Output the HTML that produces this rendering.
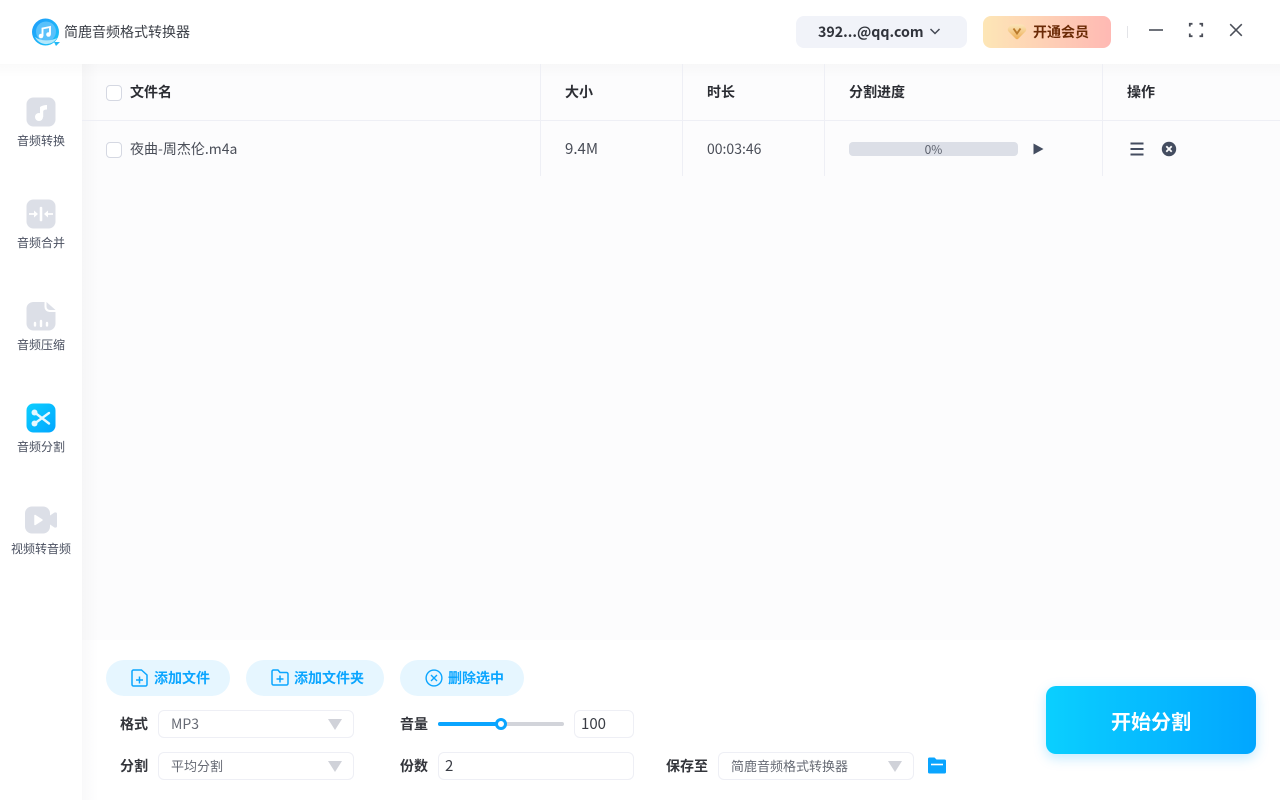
<!DOCTYPE html>
<html lang="zh">
<head>
<meta charset="utf-8">
<style>
html,body{margin:0;padding:0;width:1280px;height:800px;overflow:hidden;background:#fff;font-family:"Noto Sans CJK SC","Liberation Sans",sans-serif;}
.a{position:absolute;white-space:nowrap;}
.t{line-height:20px;height:20px;}
.nav{font-size:12px;color:#4a5060;width:82px;text-align:center;left:0;line-height:16px;}
.th{font-size:14px;font-weight:bold;color:#2b2d33;}
.td{font-size:14px;color:#4a4e58;}
.line{position:absolute;background:#eeeff5;}
.cb{position:absolute;width:14px;height:14px;border:1px solid #d5d8e2;border-radius:4px;background:#fff;left:106px;}
.pill{position:absolute;top:660px;height:36px;border-radius:18px;background:#e6f6ff;}
.pt{font-size:14px;font-weight:bold;color:#0aa5ff;}
.lb{font-size:14px;font-weight:bold;color:#33353b;}
.box{position:absolute;box-sizing:border-box;border:1px solid #eeeff5;border-radius:6px;background:#fff;height:28px;}
.v{font-size:13px;color:#666a74;}
.arr{position:absolute;width:0;height:0;border-left:7px solid transparent;border-right:7px solid transparent;border-top:11px solid #d0d2d9;}
svg{position:absolute;display:block;}
</style>
</head>
<body>
<!-- content background -->
<div class="a" style="left:82px;top:64px;width:1198px;height:576px;background:#fcfcfd;"></div>
<div class="a" style="left:82px;top:64px;width:16px;height:576px;background:linear-gradient(90deg,#f6f6f7,#fcfcfd);"></div>
<div class="a" style="left:0;top:64px;width:1280px;height:14px;background:linear-gradient(180deg,rgba(0,0,0,.018),rgba(0,0,0,0));"></div>
<div class="a" style="left:82px;top:640px;width:16px;height:160px;background:linear-gradient(90deg,#f9f9fa,#fff);"></div>

<!-- title bar -->
<svg style="left:30px;top:16px" width="32" height="32" viewBox="0 0 32 32">
  <defs><linearGradient id="lg" x1="0" y1="0" x2="1" y2="1"><stop offset="0" stop-color="#1f9bfb"/><stop offset="1" stop-color="#1cc6f7"/></linearGradient></defs>
  <circle cx="15.500" cy="16" r="13.500" fill="url(#lg)"/>
  <path d="M24 26 L30 26 L26 30 Z" fill="#22b8f5"/>
  <circle cx="16" cy="15.500" r="10" fill="#59c1fb"/>
  <path d="M5 21 A12.500 12.500 0 0 0 27 22 A15 9 0 0 1 5 21Z" fill="#b5e8fb"/>
  <path d="M12.500 20V12.500L20 11V18.500" fill="none" stroke="#fff" stroke-width="1.900"/>
  <circle cx="11" cy="20" r="2.300" fill="#fff"/><circle cx="18.500" cy="18.500" r="2.300" fill="#fff"/>
</svg>
<div class="a t" style="left:64px;top:22px;font-size:14px;color:#3c4048;">简鹿音频格式转换器</div>

<div class="a" style="left:796px;top:16px;width:171px;height:32px;border-radius:8px;background:#f1f3f9;"></div>
<div class="a t" style="left:818px;top:22px;font-size:14.200px;font-weight:bold;color:#30333b;">392...@qq.com</div>
<svg style="left:929px;top:27px" width="12" height="9" viewBox="0 0 12 9"><path d="M1.500 2 L6 6.500 L10.500 2" fill="none" stroke="#444954" stroke-width="1.500"/></svg>

<div class="a" style="left:983px;top:16px;width:128px;height:32px;border-radius:8px;background:linear-gradient(90deg,#fde6b6,#ffb9b4);"></div>
<svg style="left:1007px;top:22px" width="20" height="19" viewBox="0 0 20 19">
  <defs><linearGradient id="dm" x1="0" y1="0" x2="0" y2="1"><stop offset="0" stop-color="#fbe6bb"/><stop offset="1" stop-color="#eeae55"/></linearGradient></defs>
  <path d="M5.500 2.500H14.500Q16 2.500 17 3.500L18.500 5.500Q20 7.500 18.500 9.500L11.500 16.500Q10 18 8.500 16.500L1.500 9.500Q0 7.500 1.500 5.500L3 3.500Q4 2.500 5.500 2.500Z" fill="url(#dm)"/>
  <path d="M6.500 6.500L10 11.500L13.500 6.500" fill="none" stroke="#b97a2c" stroke-width="1.900"/>
</svg>
<div class="a t" style="left:1033px;top:22px;font-size:14px;font-weight:bold;color:#6b2a06;">开通会员</div>

<div class="a" style="left:1127px;top:26px;width:1px;height:12px;background:#e3e4e8;"></div>
<svg style="left:1148px;top:22px" width="16" height="16" viewBox="0 0 16 16"><path d="M1 8H15" stroke="#4a4e58" stroke-width="1.600"/></svg>
<svg style="left:1188px;top:22px" width="16" height="16" viewBox="0 0 16 16"><path d="M1.800 4.500V1.800H4.500M11.500 1.800H14.200V4.500M14.200 11.500V14.200H11.500M4.500 14.200H1.800V11.500" fill="none" stroke="#4a4e58" stroke-width="1.800"/></svg>
<svg style="left:1228px;top:22px" width="16" height="16" viewBox="0 0 16 16"><path d="M2.200 2.200L13.800 13.800M13.800 2.200L2.200 13.800" stroke="#4a4e58" stroke-width="1.500"/></svg>

<!-- sidebar -->
<svg style="left:26px;top:97px" width="30" height="30" viewBox="0 0 30 30"><rect x=".5" y=".5" width="29" height="29" rx="7" fill="#dcdfe7"/><path d="M14 20V10Q17 8 21 8V12.500Q18 12.500 17.200 14V20" fill="#fff"/><circle cx="13" cy="20" r="4" fill="#fff"/></svg>
<div class="a nav" style="top:133px;">音频转换</div>

<svg style="left:26px;top:199px" width="30" height="30" viewBox="0 0 30 30"><rect x=".5" y=".5" width="29" height="29" rx="7" fill="#dcdfe7"/><path d="M15 9V21" stroke="#fff" stroke-width="2.600" stroke-linecap="round"/><path d="M3 15H9M21 15H27" stroke="#fff" stroke-width="1.800"/><path d="M8 11.500L12 15L8 18.500ZM22 11.500L18 15L22 18.500Z" fill="#fff"/></svg>
<div class="a nav" style="top:235px;">音频合并</div>

<svg style="left:26px;top:301px" width="30" height="30" viewBox="0 0 30 30"><path d="M7 1H18.500V6A5 5 0 0 0 23.500 11H29.500V22.500A7 7 0 0 1 22.500 29.500H7.500A7 7 0 0 1 .5 22.500V7.500A7 6.500 0 0 1 7 1Z" fill="#dcdfe7"/><path d="M20.500 1L29.500 9H24A3.500 3.500 0 0 1 20.500 5.500Z" fill="#dcdfe7"/><path d="M9 22V24.500M15 20V25M21 22V24.500" stroke="#fff" stroke-width="2.400" stroke-linecap="round"/></svg>
<div class="a nav" style="top:337px;">音频压缩</div>

<svg style="left:26px;top:403px" width="30" height="30" viewBox="0 0 30 30"><defs><linearGradient id="lb" x1="0" y1="0" x2="1" y2="1"><stop offset="0" stop-color="#0ccfff"/><stop offset="1" stop-color="#02a6ff"/></linearGradient></defs><rect x=".5" y=".5" width="29" height="29" rx="7" fill="url(#lb)"/><path d="M10 19.500L23 10M10 10.500L23 20.500" stroke="#e6f8ff" stroke-width="2.400" stroke-linecap="round"/><circle cx="8.500" cy="9.500" r="3" fill="#e6f8ff"/><circle cx="8.500" cy="20.500" r="3" fill="#e6f8ff"/></svg>
<div class="a nav" style="top:439px;">音频分割</div>

<svg style="left:25px;top:506px" width="32" height="28" viewBox="0 0 32 28"><rect x="0" y=".5" width="25" height="27" rx="7" fill="#dcdfe7"/><path d="M25 9.500L29.500 6.500Q32 6 32 8V20Q32 22 29.500 21.500L25 18.500Z" fill="#dcdfe7"/><path d="M10 9.500L17 14L10 18.500Z" fill="#fff" stroke="#fff" stroke-linejoin="round" stroke-width="1.500"/></svg>
<div class="a nav" style="top:541px;">视频转音频</div>

<!-- table -->
<div class="line" style="left:82px;top:120px;width:1198px;height:1px;"></div>
<div class="line" style="left:540px;top:64px;width:1px;height:112px;"></div>
<div class="line" style="left:682px;top:64px;width:1px;height:112px;"></div>
<div class="line" style="left:824px;top:64px;width:1px;height:112px;"></div>
<div class="line" style="left:1102px;top:64px;width:1px;height:112px;"></div>

<div class="cb" style="top:85px;"></div>
<div class="a t th" style="left:130px;top:82px;">文件名</div>
<div class="a t th" style="left:565px;top:82px;">大小</div>
<div class="a t th" style="left:707px;top:82px;">时长</div>
<div class="a t th" style="left:849px;top:82px;">分割进度</div>
<div class="a t th" style="left:1127px;top:82px;">操作</div>

<div class="cb" style="top:142px;"></div>
<div class="a t td" style="left:130px;top:139px;">夜曲-周杰伦.m4a</div>
<div class="a t td" style="left:565px;top:139px;font-size:15px;">9.4M</div>
<div class="a t td" style="left:707px;top:139px;">00:03:46</div>
<div class="a" style="left:849px;top:142px;width:169px;height:14px;border-radius:4px;background:#dcdfe7;text-align:center;font-size:12px;line-height:15px;color:#5b606c;">0%</div>
<svg style="left:1032px;top:142px" width="12" height="14" viewBox="0 0 12 14"><path d="M1.500 1.500L11.500 7L1.500 12.500Z" fill="#444d60"/></svg>
<svg style="left:1130px;top:142px" width="14" height="14" viewBox="0 0 14 14"><path d="M.5 1.500H13.500M.5 7H13.500M.5 12.500H13.500" stroke="#444d60" stroke-width="2"/></svg>
<svg style="left:1161px;top:141px" width="16" height="16" viewBox="0 0 16 16"><circle cx="8" cy="8" r="7.200" fill="#444d60"/><path d="M5.300 5.300L10.700 10.700M10.700 5.300L5.300 10.700" stroke="#fff" stroke-width="1.800"/></svg>

<!-- bottom buttons -->
<div class="pill" style="left:106px;width:124px;"></div>
<svg style="left:131px;top:669px" width="18" height="18" viewBox="0 0 18 18"><path d="M2 1H10.500L16 6V15.500A1.500 1.500 0 0 1 14.500 17H2.500A1.500 1.500 0 0 1 1 15.500V2Z" fill="none" stroke="#0aa5ff" stroke-width="1.500" stroke-linejoin="round"/><path d="M5 11H12M8.500 7.500V14.500" stroke="#0aa5ff" stroke-width="1.500"/></svg>
<div class="a t pt" style="left:154px;top:668px;">添加文件</div>

<div class="pill" style="left:246px;width:138px;"></div>
<svg style="left:271px;top:669px" width="18" height="18" viewBox="0 0 18 18"><path d="M1 2.500A1.500 1.500 0 0 1 2.500 1H7L9 3.500H15.500A1.500 1.500 0 0 1 17 5V14.500A1.500 1.500 0 0 1 15.500 16H2.500A1.500 1.500 0 0 1 1 14.500Z" fill="none" stroke="#0aa5ff" stroke-width="1.500" stroke-linejoin="round"/><path d="M5.500 10H12.500M9 6.500V13.500" stroke="#0aa5ff" stroke-width="1.500"/></svg>
<div class="a t pt" style="left:294px;top:668px;">添加文件夹</div>

<div class="pill" style="left:400px;width:124px;"></div>
<svg style="left:425px;top:669px" width="18" height="18" viewBox="0 0 18 18"><circle cx="9" cy="9" r="7.900" fill="none" stroke="#0aa5ff" stroke-width="1.400"/><path d="M6 6L12 12M12 6L6 12" stroke="#0aa5ff" stroke-width="1.400"/></svg>
<div class="a t pt" style="left:448px;top:668px;">删除选中</div>

<!-- form -->
<div class="a t lb" style="left:120px;top:714px;">格式</div>
<div class="box" style="left:158px;top:710px;width:196px;"></div>
<div class="a t v" style="left:171px;top:714px;font-size:14px;">MP3</div>
<div class="arr" style="left:328px;top:719px;"></div>

<div class="a t lb" style="left:120px;top:756px;">分割</div>
<div class="box" style="left:158px;top:752px;width:196px;"></div>
<div class="a t v" style="left:171px;top:756px;">平均分割</div>
<div class="arr" style="left:328px;top:761px;"></div>

<div class="a t lb" style="left:400px;top:714px;">音量</div>
<div class="a" style="left:438px;top:722px;width:126px;height:4px;border-radius:2px;background:#d2d4da;"></div>
<div class="a" style="left:438px;top:722px;width:63px;height:4px;border-radius:2px;background:#0aa5ff;"></div>
<div class="a" style="left:495px;top:718px;width:12px;height:12px;box-sizing:border-box;border-radius:50%;background:#fff;border:3px solid #0aa5ff;"></div>
<div class="box" style="left:574px;top:710px;width:60px;"></div>
<div class="a t" style="left:581px;top:714px;font-size:15px;color:#3a3d45;">100</div>

<div class="a t lb" style="left:400px;top:756px;">份数</div>
<div class="box" style="left:438px;top:752px;width:196px;"></div>
<div class="a t" style="left:445px;top:756px;font-size:15px;color:#3a3d45;">2</div>

<div class="a t lb" style="left:666px;top:756px;">保存至</div>
<div class="box" style="left:718px;top:752px;width:196px;"></div>
<div class="a t" style="left:731px;top:756px;font-size:13px;color:#666a74;">简鹿音频格式转换器</div>
<div class="arr" style="left:888px;top:761px;"></div>
<svg style="left:927px;top:757px" width="20" height="17" viewBox="0 0 20 17"><path d="M1 2A1.500 1.500 0 0 1 2.500 .5H7.500L9.500 2.500H17.500A1.500 1.500 0 0 1 19 4V15A1.500 1.500 0 0 1 17.500 16.500H2.500A1.500 1.500 0 0 1 1 15Z" fill="#0aa5ff"/><path d="M4 7.500H16" stroke="#fff" stroke-width="1.600"/></svg>

<!-- start -->
<div class="a" style="left:1046px;top:686px;width:210px;height:68px;border-radius:10px;background:linear-gradient(90deg,#0acfff,#02a6ff);box-shadow:0 4px 12px rgba(10,170,255,.25);color:#fff;font-size:20px;font-weight:bold;text-align:center;line-height:70px;">开始分割</div>
</body>
</html>
